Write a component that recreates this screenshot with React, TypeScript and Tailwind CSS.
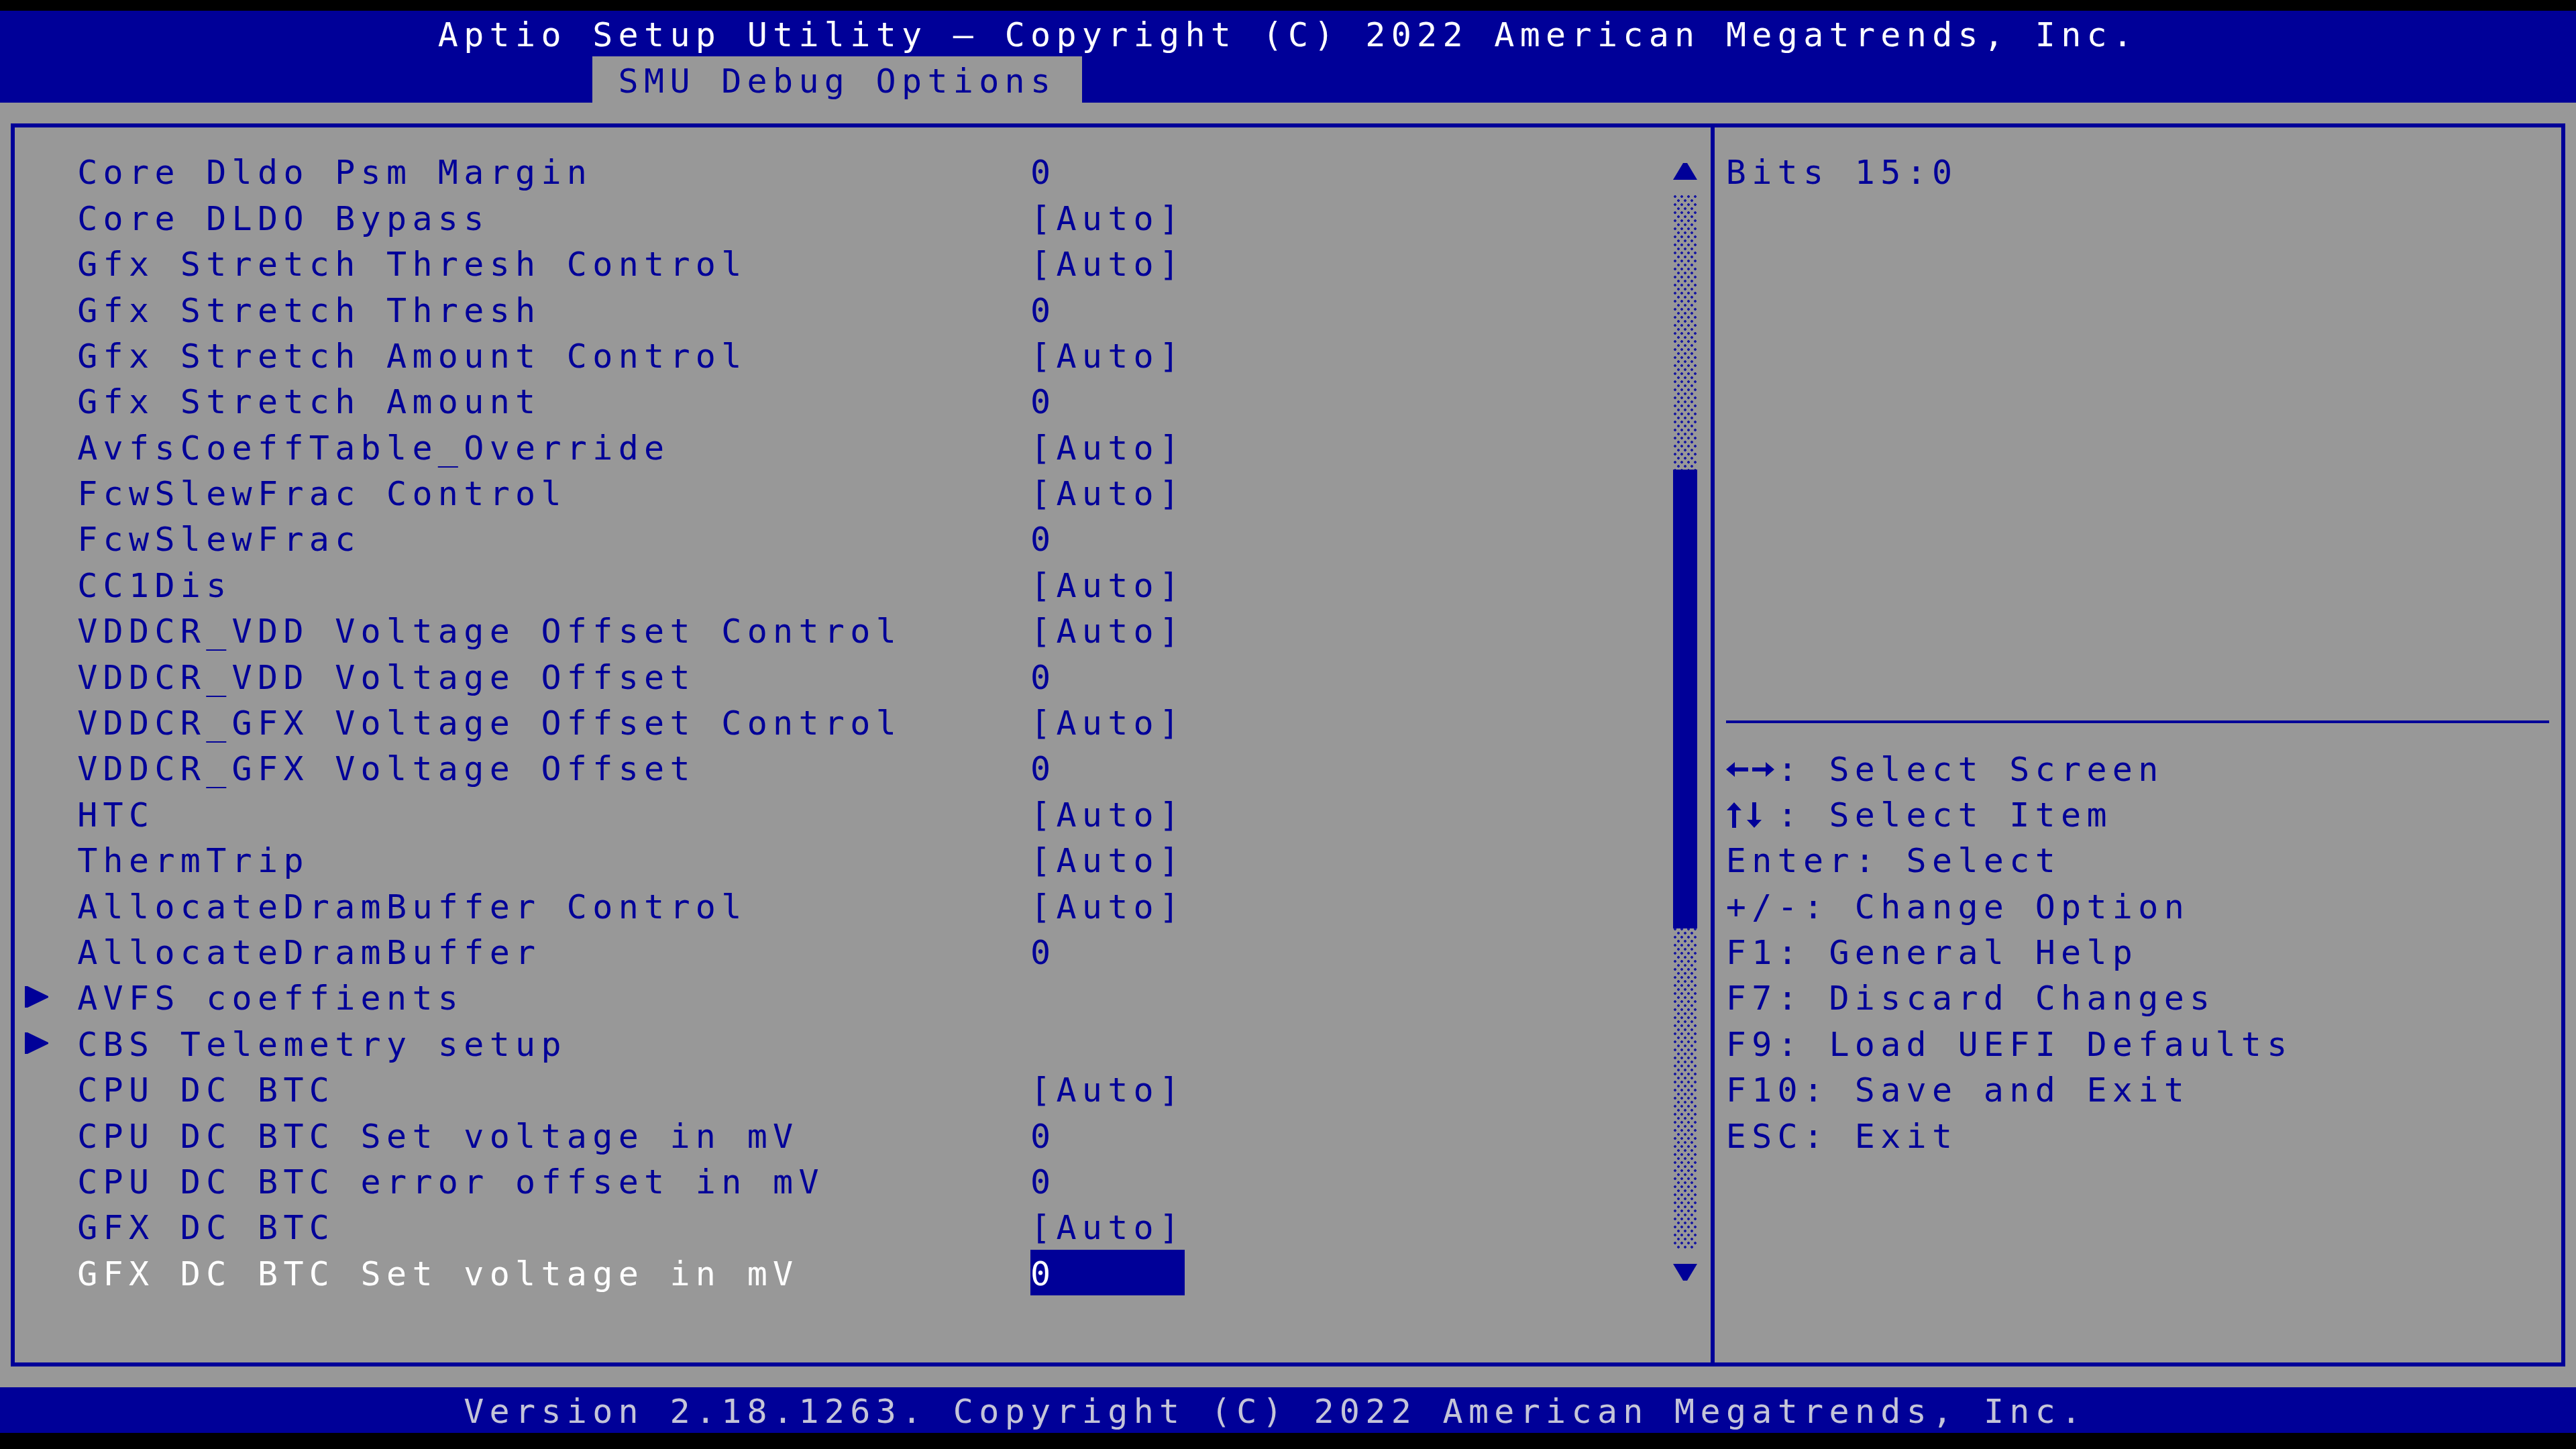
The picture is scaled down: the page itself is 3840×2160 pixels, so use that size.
import clsx from 'clsx'

type Item = { label: string; value?: string; submenu?: boolean }

const items: Item[] = [
  { label: 'Core Dldo Psm Margin', value: '0' },
  { label: 'Core DLDO Bypass', value: '[Auto]' },
  { label: 'Gfx Stretch Thresh Control', value: '[Auto]' },
  { label: 'Gfx Stretch Thresh', value: '0' },
  { label: 'Gfx Stretch Amount Control', value: '[Auto]' },
  { label: 'Gfx Stretch Amount', value: '0' },
  { label: 'AvfsCoeffTable_Override', value: '[Auto]' },
  { label: 'FcwSlewFrac Control', value: '[Auto]' },
  { label: 'FcwSlewFrac', value: '0' },
  { label: 'CC1Dis', value: '[Auto]' },
  { label: 'VDDCR_VDD Voltage Offset Control', value: '[Auto]' },
  { label: 'VDDCR_VDD Voltage Offset', value: '0' },
  { label: 'VDDCR_GFX Voltage Offset Control', value: '[Auto]' },
  { label: 'VDDCR_GFX Voltage Offset', value: '0' },
  { label: 'HTC', value: '[Auto]' },
  { label: 'ThermTrip', value: '[Auto]' },
  { label: 'AllocateDramBuffer Control', value: '[Auto]' },
  { label: 'AllocateDramBuffer', value: '0' },
  { label: 'AVFS coeffients', submenu: true },
  { label: 'CBS Telemetry setup', submenu: true },
  { label: 'CPU DC BTC', value: '[Auto]' },
  { label: 'CPU DC BTC Set voltage in mV', value: '0' },
  { label: 'CPU DC BTC error offset in mV', value: '0' },
  { label: 'GFX DC BTC', value: '[Auto]' },
  { label: 'GFX DC BTC Set voltage in mV', value: '0' },
]

const selectedIndex = items.length - 1

const BLUE = '#000098'

function LeftRightArrows() {
  return (
    <svg width="72" height="28" viewBox="0 0 72 28">
      <path d="M0 14 L13 3 L13 11 L33 11 L33 17 L13 17 L13 25 Z" fill={BLUE} />
      <path d="M72 14 L59 3 L59 11 L39 11 L39 17 L59 17 L59 25 Z" fill={BLUE} />
    </svg>
  )
}

function UpDownArrows() {
  return (
    <svg width="72" height="38" viewBox="0 0 72 38">
      <path d="M12 0 L23 12 L15 12 L15 38 L9 38 L9 12 L1 12 Z" fill={BLUE} />
      <path d="M42 38 L31 26 L39 26 L39 0 L45 0 L45 26 L53 26 Z" fill={BLUE} />
    </svg>
  )
}

// key legend: [icon in a two-cell slot, rest of line]
const keys: [JSX.Element | null, string][] = [
  [<LeftRightArrows />, ': Select Screen'],
  [<UpDownArrows />, ': Select Item'],
  [null, 'Enter: Select'],
  [null, '+/-: Change Option'],
  [null, 'F1: General Help'],
  [null, 'F7: Discard Changes'],
  [null, 'F9: Load UEFI Defaults'],
  [null, 'F10: Save and Exit'],
  [null, 'ESC: Exit'],
]

function Triangle({ dir }: { dir: 'up' | 'down' | 'right' }) {
  if (dir === 'right') {
    return (
      <svg width="35" height="32" viewBox="0 0 35 32">
        <path d="M0 0 L4 0 L35 15 L35 17 L4 32 L0 32 Z" fill={BLUE} />
      </svg>
    )
  }
  return (
    <svg width="36" height="25" viewBox="0 0 36 25" className={dir === 'down' ? 'rotate-180' : ''}>
      <path d="M15 0 L21 0 L36 25 L0 25 Z" fill={BLUE} />
    </svg>
  )
}

function ItemRow({ item, selected }: { item: Item; selected: boolean }) {
  return (
    <div className="flex h-[68.4px] items-center">
      <div className="flex w-[93.2px] pl-[15px]">{item.submenu && <Triangle dir="right" />}</div>
      <div className={clsx('w-[1420.8px] whitespace-pre pt-[4px]', selected ? 'text-white' : 'text-[#000098]')}>
        {item.label}
      </div>
      {item.value && (
        <div
          className={clsx(
            'flex h-full items-center whitespace-pre pt-[4px]',
            selected ? 'w-[230.4px] bg-[#000098] text-white' : 'text-[#000098]'
          )}
        >
          {item.value}
        </div>
      )}
    </div>
  )
}

function ScrollBar() {
  return (
    <div className="mr-[20px] flex w-[36px] flex-col pt-[31.2px]">
      <div className="flex h-[68.4px] items-center justify-center">
        <Triangle dir="up" />
      </div>
      <div className="h-[1573.2px] bg-[radial-gradient(circle_at_3px_3px,#1a1aa0_1.6px,transparent_2.2px),radial-gradient(circle_at_8px_9px,#1a1aa0_1.6px,transparent_2.2px)] bg-[length:10px_12px]">
        <div className="mt-[410.4px] h-[684px] bg-[#000098]" />
      </div>
      <div className="flex h-[68.4px] items-center justify-center">
        <Triangle dir="down" />
      </div>
    </div>
  )
}

export default function App() {
  return (
    <div className="flex h-[2160px] w-[3840px] flex-col bg-black font-['DejaVu_Sans_Mono',monospace] text-[50px] leading-none tracking-[8.3px]">
      <div className="h-[16px]" />

      {/* title bar */}
      <header className="h-[136.8px] bg-[#000098]">
        <div className="flex h-[68.4px] items-center whitespace-pre pl-[652.8px] pt-[4px] text-white">
          Aptio Setup Utility – Copyright (C) 2022 American Megatrends, Inc.
        </div>
        <div className="flex h-[68.4px]">
          <div className="ml-[883.2px] flex w-[729.6px] items-center whitespace-pre bg-[#989898] pl-[38.4px] pt-[4px] text-[#000098]">
            SMU Debug Options
          </div>
        </div>
      </header>

      <main className="h-[1915.2px] bg-[#989898] pt-[31.2px]">
        <div className="ml-[16px] flex h-[1853px] w-[3808px] border-[6px] border-[#000098]">
          {/* setup items */}
          <section className="flex w-[2534px] border-r-[6px] border-[#000098]">
            <div className="flex-1 pt-[31.2px]">
              {items.map((item, i) => (
                <ItemRow key={item.label} item={item} selected={i === selectedIndex} />
              ))}
            </div>
            <ScrollBar />
          </section>

          {/* help panel */}
          <aside className="flex-1 pl-[16.8px] pt-[31.2px] text-[#000098]">
            <div className="flex h-[68.4px] items-center whitespace-pre pt-[4px]">Bits 15:0</div>
            <div className="h-[752.4px]" />
            <div className="flex h-[68.4px] items-center">
              <div className="h-[4px] w-[1227px] bg-[#000098]" />
            </div>
            {keys.map(([icon, rest]) => (
              <div key={rest} className="flex h-[68.4px] items-center whitespace-pre pt-[4px]">
                {icon && <span className="flex w-[76.8px] items-center">{icon}</span>}
                <span>{rest}</span>
              </div>
            ))}
          </aside>
        </div>
      </main>

      <footer className="flex h-[68.4px] items-center whitespace-pre bg-[#000098] pl-[691.2px] pt-[4px] text-[#c4c4d8]">
        Version 2.18.1263. Copyright (C) 2022 American Megatrends, Inc.
      </footer>
      <div className="flex-1" />
    </div>
  )
}
